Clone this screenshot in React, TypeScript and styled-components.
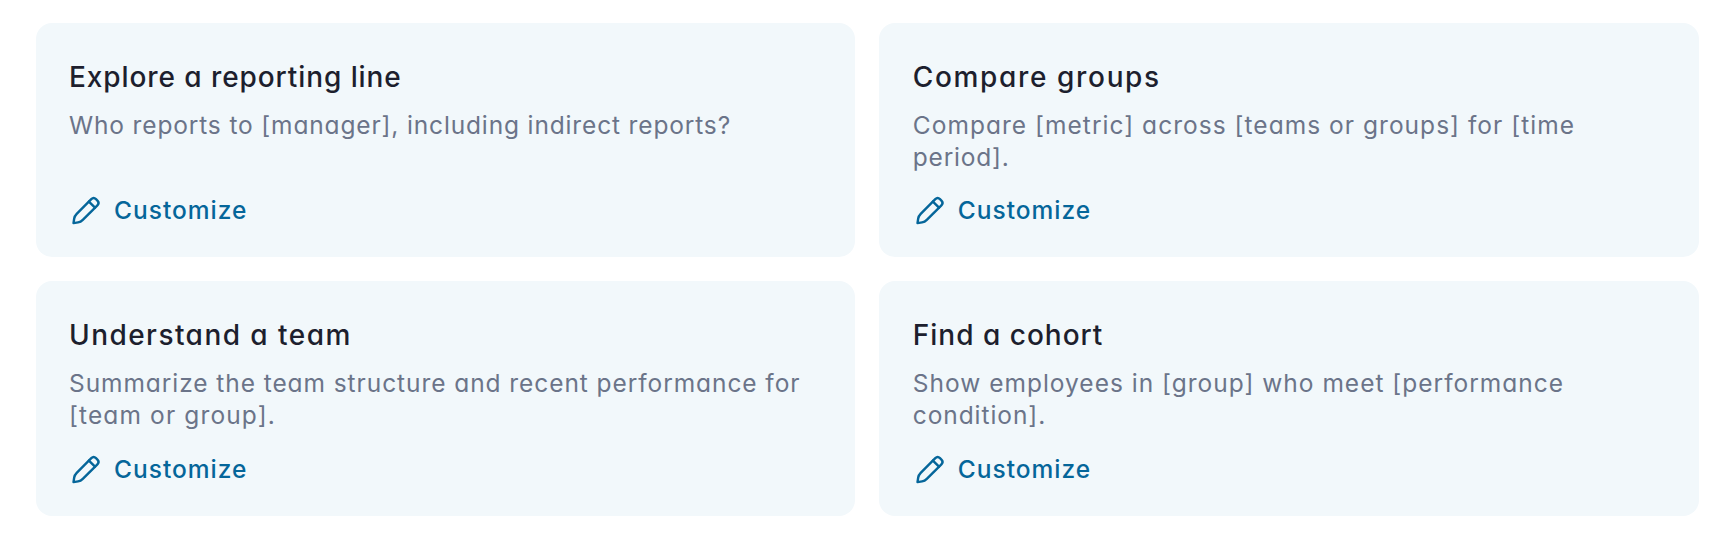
import React from "react";
import styled, { createGlobalStyle } from "styled-components";

const GlobalStyle = createGlobalStyle`
  *, *::before, *::after { box-sizing: border-box; }
  body {
    margin: 0;
    background: #fff;
    font-family: Inter, "Liberation Sans", sans-serif;
    font-feature-settings: "cv11";
  }
`;

const Page = styled.main`
  padding: 23.2px 9.8px 0 35.6px;
`;

const CardGrid = styled.div`
  display: grid;
  grid-template-columns: 1fr 1fr;
  grid-template-rows: 234px 235px;
  gap: 24px;
`;

const Card = styled.article`
  display: flex;
  flex-direction: column;
  padding: 34px 32px 29.2px 33.4px;
  border-radius: 16px;
  background: #f2f8fb;
`;

const Title = styled.h2<{ $tracking: number }>`
  margin: 0;
  color: #1d1f2e;
  font-size: 28px;
  font-weight: 500;
  line-height: 40px;
  letter-spacing: ${(p) => p.$tracking}px;
  white-space: nowrap;
`;

const Prompt = styled.p`
  margin: 12px 0 0;
  color: #6b7489;
  font-size: 24.5px;
  line-height: 32px;
`;

const PromptLine = styled.span<{ $tracking: number }>`
  display: block;
  letter-spacing: ${(p) => p.$tracking}px;
  white-space: nowrap;
`;

const CustomizeButton = styled.button`
  display: flex;
  align-items: center;
  gap: 13px;
  margin-top: auto;
  padding: 0;
  border: 0;
  background: none;
  color: #05669a;
  font: inherit;
  font-feature-settings: inherit;
  font-size: 24.5px;
  font-weight: 500;
  line-height: 36px;
  letter-spacing: 1px;
  cursor: pointer;
`;

const Icon = styled.svg`
  flex: none;
  width: 32px;
  height: 32px;
`;

const PencilIcon = () => (
  <Icon viewBox="0 0 32 32" fill="none" stroke="currentColor" strokeWidth="2.4" strokeLinecap="round" strokeLinejoin="round" aria-hidden="true">
    <path d="M4.5 29.1 L5.2 24.5 C5.5 22.6 6.3 21.2 7.7 19.8 L22.3 5.2 C23.7 3.8 25.7 3.9 27 5.2 L28.4 6.6 C29.7 7.9 29.8 9.9 28.4 11.3 L13.8 25.9 C12.4 27.3 11 28.1 9.1 28.4 Z" />
    <path d="M19.9 7.6 L26 13.7" />
  </Icon>
);

type Line = { text: string; tracking: number };
type CardData = { title: string; tracking: number; lines: Line[] };

const cards: CardData[] = [
  {
    title: "Explore a reporting line",
    tracking: 0.92,
    lines: [{ text: "Who reports to [manager], including indirect reports?", tracking: 0.85 }],
  },
  {
    title: "Compare groups",
    tracking: 1.65,
    lines: [
      { text: "Compare [metric] across [teams or groups] for [time", tracking: 1.03 },
      { text: "period].", tracking: 0.8 },
    ],
  },
  {
    title: "Understand a team",
    tracking: 1.45,
    lines: [
      { text: "Summarize the team structure and recent performance for", tracking: 0.93 },
      { text: "[team or group].", tracking: 1.13 },
    ],
  },
  {
    title: "Find a cohort",
    tracking: 1,
    lines: [
      { text: "Show employees in [group] who meet [performance", tracking: 1 },
      { text: "condition].", tracking: 0.92 },
    ],
  },
];

export default function App() {
  return (
    <>
      <GlobalStyle />
      <Page>
        <CardGrid>
          {cards.map((card) => (
            <Card key={card.title}>
              <Title $tracking={card.tracking}>{card.title}</Title>
              <Prompt>
                {card.lines.map((line) => (
                  <PromptLine key={line.text} $tracking={line.tracking}>{line.text}</PromptLine>
                ))}
              </Prompt>
              <CustomizeButton type="button">
                <PencilIcon />
                Customize
              </CustomizeButton>
            </Card>
          ))}
        </CardGrid>
      </Page>
    </>
  );
}
